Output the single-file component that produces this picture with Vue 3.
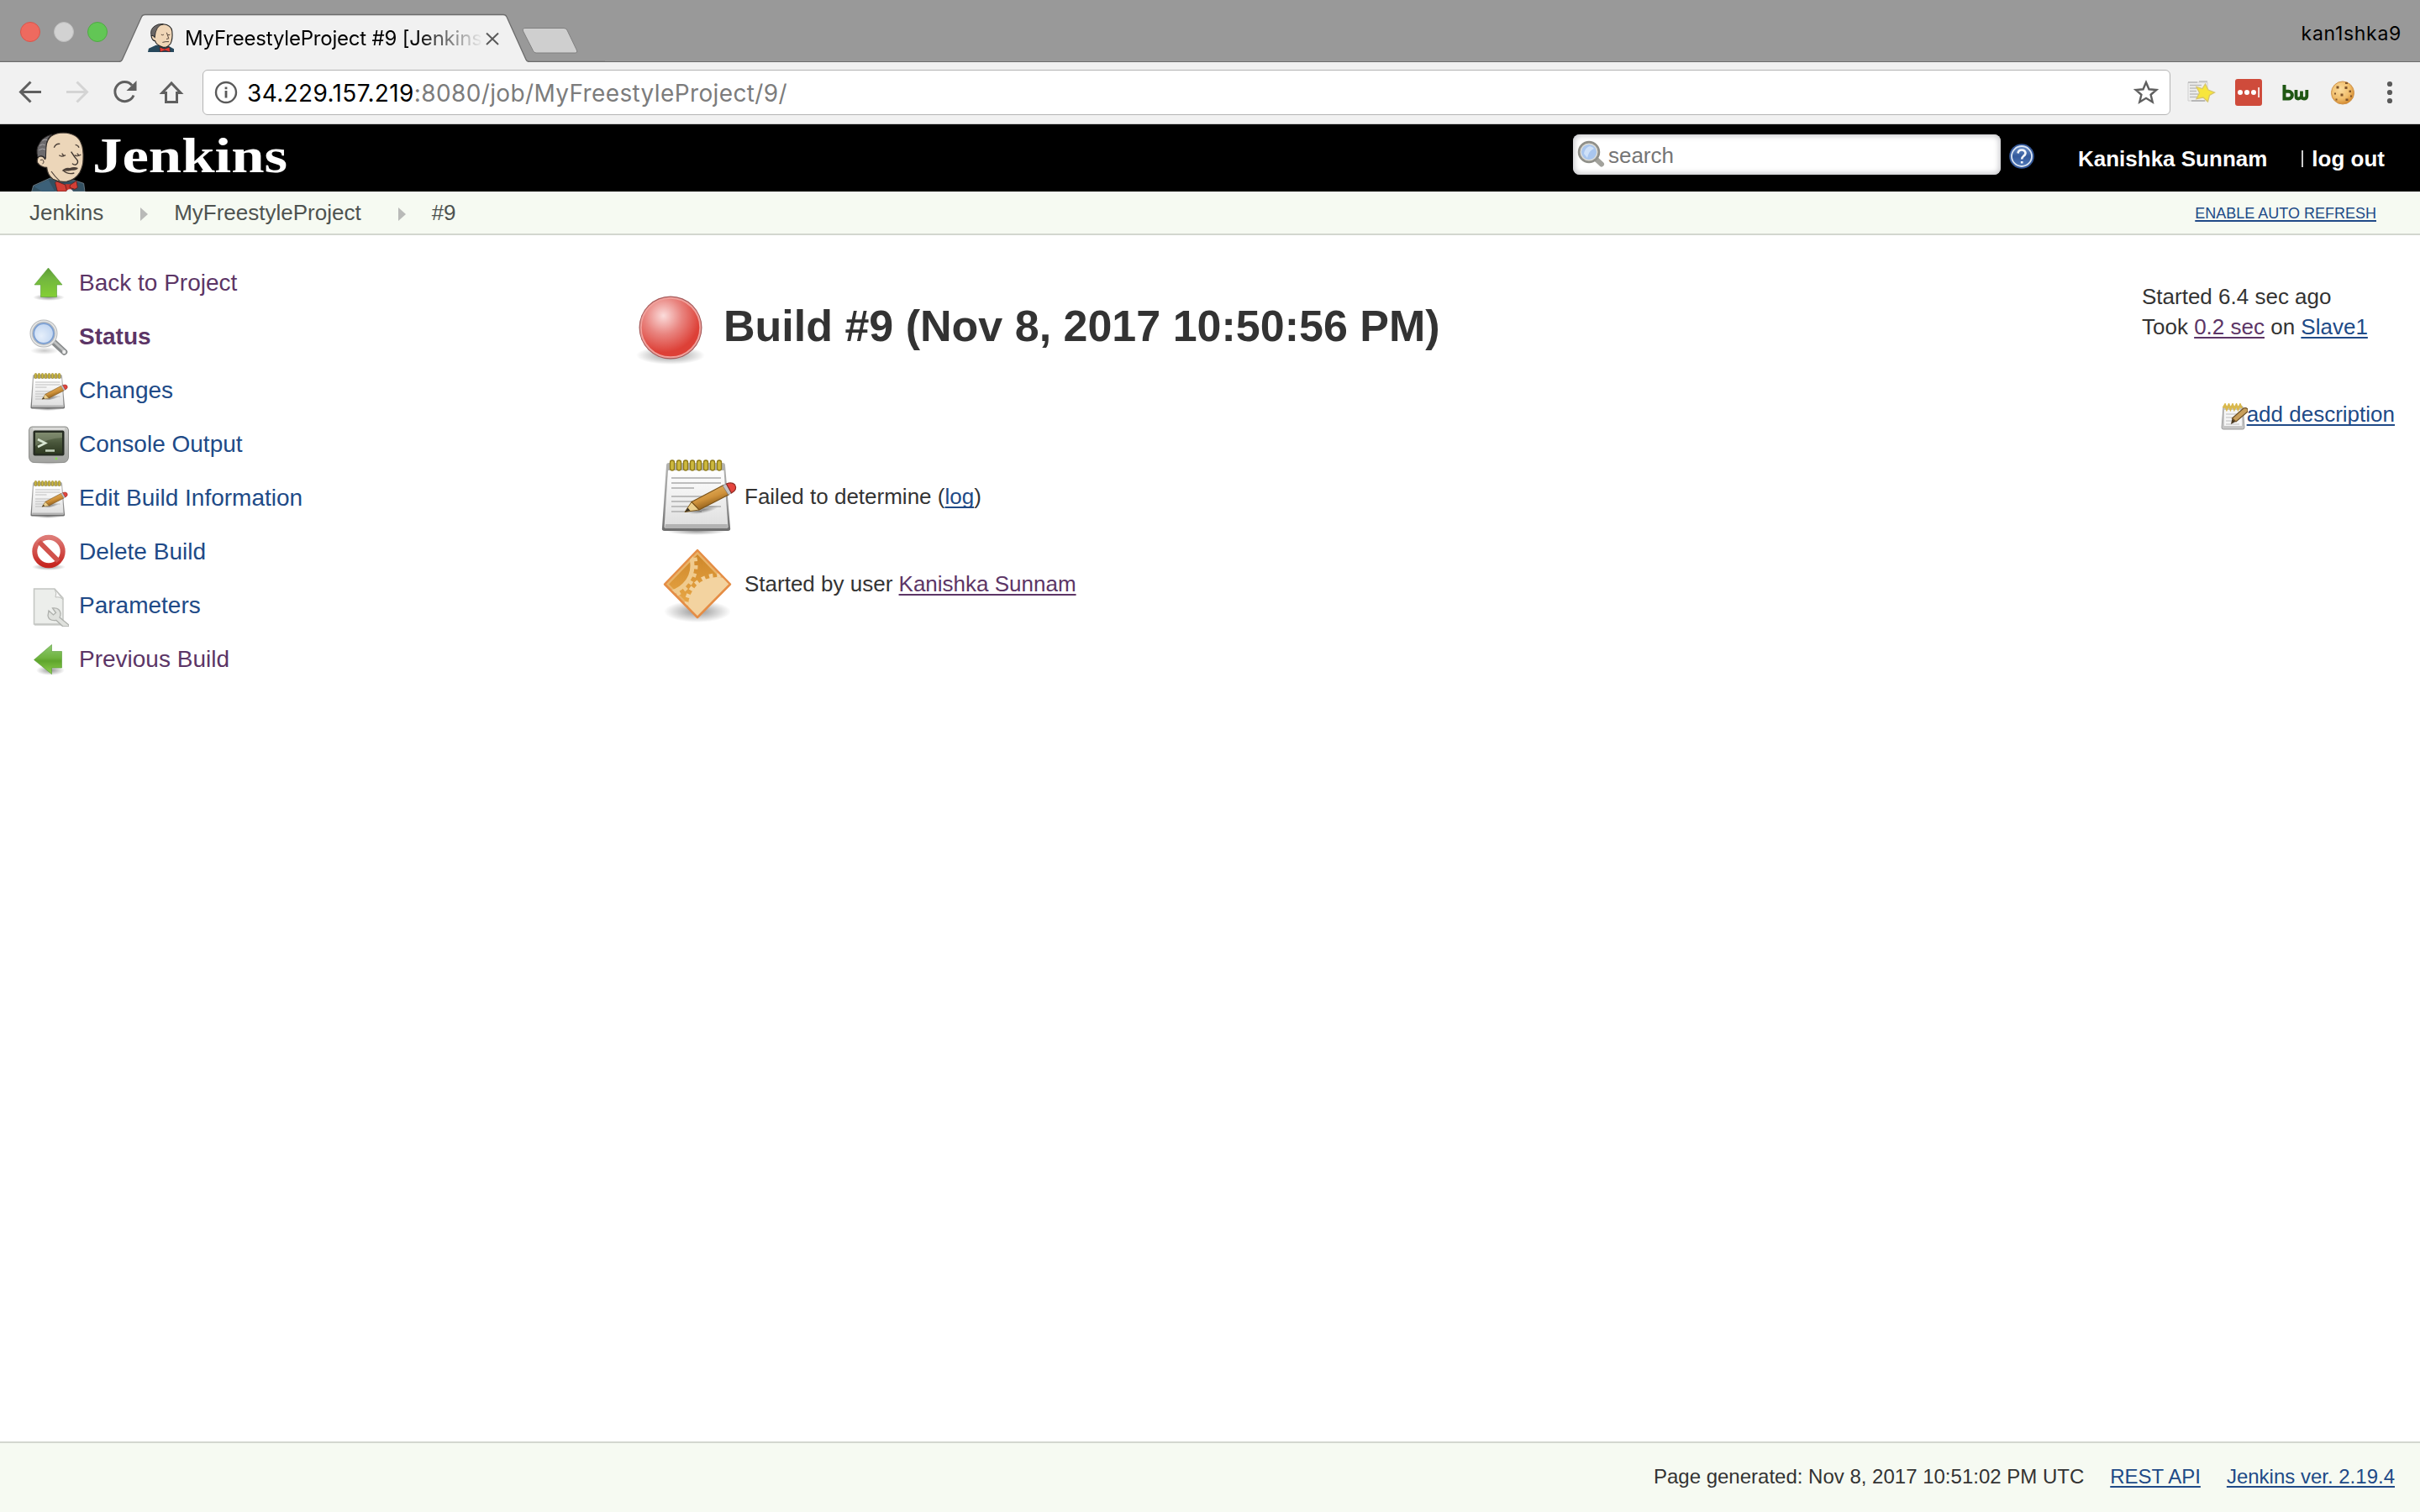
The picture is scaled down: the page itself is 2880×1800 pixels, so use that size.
<script setup>
const tasks = [
  { label: 'Back to Project', icon: 'i-up', visited: true },
  { label: 'Status', icon: 'i-search', visited: true, bold: true },
  { label: 'Changes', icon: 'i-notepad' },
  { label: 'Console Output', icon: 'i-terminal' },
  { label: 'Edit Build Information', icon: 'i-notepad' },
  { label: 'Delete Build', icon: 'i-delete' },
  { label: 'Parameters', icon: 'i-params' },
  { label: 'Previous Build', icon: 'i-prev', visited: true },
]
const rings = [0, 1, 2, 3, 4, 5, 6, 7]
</script>

<template>
  <div class="window">
    <svg class="sprites" width="0" height="0" aria-hidden="true">
      <defs>
        <linearGradient id="g-green" x1="0" y1="0" x2="0" y2="1">
          <stop offset="0" stop-color="#5d9c35" /><stop offset=".35" stop-color="#72b63f" /><stop offset="1" stop-color="#84cf35" />
        </linearGradient>
        <linearGradient id="g-green2" x1="0" y1="0" x2="0" y2="1">
          <stop offset="0" stop-color="#8ec972" /><stop offset=".45" stop-color="#6fb33e" /><stop offset=".55" stop-color="#5fa52c" /><stop offset="1" stop-color="#8fd04e" />
        </linearGradient>
        <radialGradient id="g-shadow">
          <stop offset="0" stop-color="#000" stop-opacity=".42" /><stop offset="1" stop-color="#000" stop-opacity="0" />
        </radialGradient>
        <radialGradient id="g-lens" cx=".4" cy=".6" r=".65">
          <stop offset="0" stop-color="#e6effb" /><stop offset="1" stop-color="#b9d0ef" />
        </radialGradient>
        <linearGradient id="g-paper" x1="0" y1="0" x2="0" y2="1">
          <stop offset="0" stop-color="#ffffff" /><stop offset="1" stop-color="#dedede" />
        </linearGradient>
        <linearGradient id="g-frame" x1="0" y1="0" x2="0" y2="1">
          <stop offset="0" stop-color="#b4b4b2" /><stop offset=".6" stop-color="#999" /><stop offset="1" stop-color="#6c6c6c" />
        </linearGradient>
        <linearGradient id="g-pencil" x1="0" y1="0" x2=".5" y2="1">
          <stop offset="0" stop-color="#f0c274" /><stop offset=".6" stop-color="#cf923b" /><stop offset="1" stop-color="#7d4f12" />
        </linearGradient>
        <linearGradient id="g-term" x1="0" y1="0" x2="0" y2="1">
          <stop offset="0" stop-color="#6d7b5c" /><stop offset=".5" stop-color="#48553a" /><stop offset="1" stop-color="#2f3a22" />
        </linearGradient>
        <linearGradient id="g-bezel" x1="0" y1="0" x2="0" y2="1">
          <stop offset="0" stop-color="#c9cac7" /><stop offset="1" stop-color="#a2a3a0" />
        </linearGradient>
        <linearGradient id="g-red" x1="0" y1="0" x2="0" y2="1">
          <stop offset="0" stop-color="#dd7a76" /><stop offset="1" stop-color="#c6251f" />
        </linearGradient>
        <radialGradient id="g-ball" cx=".38" cy=".3" r=".62">
          <stop offset="0" stop-color="#fbdcdb" /><stop offset=".5" stop-color="#e98580" /><stop offset="1" stop-color="#dd4037" />
        </radialGradient>
        <linearGradient id="g-diamond" x1="0" y1="0" x2="0" y2="1">
          <stop offset="0" stop-color="#cc8427" /><stop offset="1" stop-color="#efb04f" />
        </linearGradient>
        <linearGradient id="g-help" x1="0" y1="0" x2="0" y2="1">
          <stop offset="0" stop-color="#6f94cc" /><stop offset=".5" stop-color="#345a9c" /><stop offset="1" stop-color="#5179b8" />
        </linearGradient>
        <radialGradient id="g-cookie" cx=".4" cy=".35" r=".65">
          <stop offset="0" stop-color="#fbdc9e" /><stop offset=".65" stop-color="#f0bd6b" /><stop offset="1" stop-color="#d58c32" />
        </radialGradient>

        <symbol id="i-up" viewBox="0 0 48 48">
          <ellipse cx="24" cy="40" rx="19" ry="4" fill="url(#g-shadow)" />
          <path d="M23.500 5 L40 25 H33.500 V39.500 H14.500 V25 H7 Z" fill="url(#g-green)" stroke="#559b33" stroke-opacity=".6" />
        </symbol>
        <symbol id="i-prev" viewBox="0 0 48 48">
          <ellipse cx="26" cy="36" rx="17" ry="6" fill="url(#g-shadow)" />
          <path d="M6.500 23.500 L27.500 5.500 V13.500 H39.500 V33 H27.500 V40.500 Z" fill="url(#g-green2)" stroke="#559b33" stroke-opacity=".6" />
        </symbol>
        <symbol id="i-search" viewBox="0 0 48 48">
          <ellipse cx="19" cy="39.500" rx="17" ry="4.500" fill="url(#g-shadow)" opacity=".5" />
          <path d="M29 28.500 L42.500 41" stroke="#888b8c" stroke-width="7.500" stroke-linecap="round" />
          <path d="M29.500 28 L42.500 40" stroke="#bfc1c1" stroke-width="3" stroke-linecap="round" />
          <circle cx="42.300" cy="41" r="2.200" fill="#eee" />
          <circle cx="18" cy="19" r="14.500" fill="url(#g-lens)" stroke="#b7b9ba" stroke-width="4" />
          <circle cx="18" cy="19" r="14.700" fill="none" stroke="#e6e7e7" stroke-width="1.600" />
          <circle cx="18" cy="19" r="11.800" fill="none" stroke="#7b9fd3" stroke-width="1.800" />
        </symbol>
        <symbol id="i-notepad" viewBox="0 0 96 96">
          <ellipse cx="46" cy="89" rx="36" ry="5" fill="url(#g-shadow)" />
          <path d="M13 8 H77 Q80 8 80 11 L86 85 Q87 89 83 89 H8 Q4 89 5 85 L10 11 Q10 8 13 8Z" fill="url(#g-frame)" />
          <path d="M12 17 H78.500 L83.500 85 H7.500Z" fill="url(#g-paper)" />
          <path d="M9 81 H82.500 L83 86 H8Z" fill="#b3b3b3" />
          <g stroke="#bdbdbd" stroke-width="2">
            <path d="M16 26H75M16 32H75M16 38H43M16 48H60M16 54H57M16 60H75M16 66H52" />
          </g>
          <g v-for="r in rings" :key="r">
            <rect :x="14.500 + r * 8" y="5" width="5" height="12" rx="2.500" fill="#cdb93f" stroke="#8f7a17" stroke-width="1.300" />
          </g>
          <ellipse cx="54" cy="64" rx="18" ry="4" fill="url(#g-shadow)" transform="rotate(-12 54 64)" />
          <path d="M32 66.500 L40 54.500 L49 64 Z" fill="#ecd08e" stroke="#805b1d" stroke-width="1" />
          <path d="M32 66.500 L35.500 61.500 L38.500 65 Z" fill="#3c3325" />
          <path d="M40 54.500 L78 34.500 L84 46 L49 64 Z" fill="url(#g-pencil)" stroke="#7a531a" stroke-width="1.200" />
          <path d="M77 35 L81.500 33 L87.500 44 L83.700 46Z" fill="#c3c3c6" stroke="#777" stroke-width=".6" />
          <path d="M81.500 33 Q88 30.500 91.500 34 Q95 40 87.500 44Z" fill="#e5453e" stroke="#8f2b23" stroke-width="1.200" />
        </symbol>
        <symbol id="i-terminal" viewBox="0 0 48 48">
          <ellipse cx="24" cy="44" rx="21" ry="3" fill="url(#g-shadow)" />
          <path d="M4 2 H44 Q47 2 47.500 6 V38 Q47 44 42 44.500 H6 Q1 44 .5 38 V6 Q1 2 4 2Z" fill="url(#g-bezel)" stroke="#8e8f8c" />
          <path d="M5 4.500H43" stroke="#e2e2e0" stroke-width="2" />
          <rect x="5.500" y="6.500" width="37" height="30" rx="2" fill="#262c22" />
          <rect x="8" y="9" width="32" height="25" fill="url(#g-term)" />
          <path d="M8 9H40V15Q22 16 8 25Z" fill="#a2ad93" opacity=".35" />
          <path d="M11 17 L20 21.500 L11 26" fill="none" stroke="#d8e6d2" stroke-width="2.600" />
          <path d="M20 30.500H31" stroke="#c3d0bc" stroke-width="2.600" />
          <circle cx="33" cy="40" r="1.400" fill="#87dd52" />
        </symbol>
        <symbol id="i-delete" viewBox="0 0 48 48">
          <ellipse cx="24" cy="41" rx="20" ry="4" fill="url(#g-shadow)" />
          <circle cx="24" cy="22.500" r="16.700" fill="#fff" stroke="url(#g-red)" stroke-width="6" />
          <path d="M12.500 11 L35.500 34" stroke="#d1524c" stroke-width="6" />
        </symbol>
        <symbol id="i-params" viewBox="0 0 48 48">
          <path d="M6.500 3 H31 L41 14 V45 H6.500Z" fill="#e9ebe8" stroke="#c4c6c2" stroke-width="1.500" />
          <path d="M8 4.500 H30 L39 15 V43 H8Z" fill="#eceeeb" />
          <path d="M31 3 Q34 8 32 13 Q38 12 41 16Z" fill="#f7f7f6" stroke="#bfc1bd" />
          <path d="M7 46H40" stroke="#b8bab6" stroke-width="1" />
          <path d="M24 29 L29.500 34 L32.500 31.500 L28.500 26 Q37 25 38 32 Q38 35 37 37 L48 46 V48 H41 L33 40.500 Q24 41.500 23 35 Z" fill="#dfe1dd" stroke="#aeb0ac" stroke-width="1.300" />
        </symbol>
      </defs>
    </svg>

    <header class="tabstrip">
      <svg class="tabs" width="720" height="74" viewBox="0 0 720 74">
        <circle cx="36" cy="38" r="11.500" fill="#ee6a5f" stroke="#d9554b" />
        <circle cx="76" cy="38" r="11.500" fill="#d2d2d2" stroke="#bdbdbd" />
        <circle cx="116" cy="38" r="11.500" fill="#62c655" stroke="#50aa44" />
        <path d="M0 73.500H141.500Q144.500 73.500 145.500 71L168.500 20Q169.700 17.500 172.500 17.500H599Q602 17.500 603 20L626 71Q627 73.500 630 73.500H720V75H0Z" fill="#f1f1f1" />
        <path d="M0 73.500H141.500Q144.500 73.500 145.500 71L168.500 20Q169.700 17.500 172.500 17.500H599Q602 17.500 603 20L626 71Q627 73.500 630 73.500H720" fill="none" stroke="#6c6c6c" stroke-width="1.300" />
        <path d="M625 33.500H671Q674 33.500 675 36L686.500 60Q687.500 63 685 63H638Q635.500 63 634.500 60.500L622.500 37Q621.500 33.500 625 33.500Z" fill="#cfcfcf" stroke="#808080" />
        <path d="M579 39.500L593 53M593 39.500L579 53" stroke="#5a5a5a" stroke-width="2" />
      </svg>
      <div class="tab-label">
        <svg width="31" height="34" viewBox="48 46 200 218">
          <path d="M48 264L54 238L110 212H195L248 240V264Z" fill="#27485c" />
          <path d="M100 95Q115 50 165 50Q228 55 234 105Q240 165 222 200Q195 232 165 228Q110 210 104 180Q78 175 74 140Q84 130 100 150Z" fill="#f0d6b7" stroke="#222" stroke-width="7" />
          <path d="M74 140Q62 90 100 65Q125 45 165 50Q110 60 100 150Q86 130 74 140Z" fill="#6a6665" stroke="#222" stroke-width="5" />
          <path d="M150 130q10 8 20 0M200 130q10 8 18 0M192 115l16 45l-18 5M160 190q25-8 50-5" fill="none" stroke="#4b3b32" stroke-width="6" />
          <path d="M138 226L175 240L215 226L218 264L180 252L142 264Z" fill="#e03a34" stroke="#222" stroke-width="4" />
        </svg>
        <span class="tab-title">MyFreestyleProject #9 [Jenkins</span>
      </div>
      <span class="profile">kan1shka9</span>
    </header>

    <div class="toolbar">
      <svg class="nav" width="241" height="72" viewBox="0 74 241 72" fill="none" stroke="#5f5f5f" stroke-width="3">
        <path d="M49 109.500H25M36.500 97.500L24.500 109.500L36.500 121.500" />
        <path d="M79 109.500H103M91.500 97.500L103.500 109.500L91.500 121.500" stroke="#d4d4d4" />
        <path d="M157 101.500A11.500 11.500 0 1 0 159 113.500" />
        <path d="M162.500 96V108H150.500Z" fill="#5f5f5f" stroke="none" />
        <path d="M204 99L193 110.500H197.500V121.500H210.500V110.500H215Z" />
      </svg>
      <div class="omnibox">
        <svg width="28" height="28" viewBox="0 0 28 28"><circle cx="14" cy="14" r="12" fill="none" stroke="#5a5a5a" stroke-width="2.400" /><path d="M14 12V20.500M14 7.500V10.200" stroke="#5a5a5a" stroke-width="2.800" /></svg>
        <span class="url"><b>34.229.157.219</b>:8080/job/MyFreestyleProject/9/</span>
        <svg class="star" width="32" height="32" viewBox="0 0 32 32"><path d="M16 4L19.500 12.300L28.300 13L21.600 18.800L23.700 27.500L16 22.800L8.300 27.500L10.400 18.800L3.700 13L12.500 12.300Z" fill="none" stroke="#5f5f5f" stroke-width="2.400" /></svg>
      </div>
      <svg class="exts" width="297" height="72" viewBox="2583 74 297 72">
        <path d="M2604 98H2627V120H2604Z" fill="#eeeeee" stroke="#cfcfcf" />
        <path d="M2604 98H2615M2617 97H2627M2606 101.500H2620M2606 105H2617M2606 108.500H2614M2606 112H2616M2606 115.500H2616" stroke="#bcbcbc" stroke-width="1.300" />
        <path d="M2608 120H2624" stroke="#aaa" stroke-width="1.500" />
        <path d="M2624.500 100L2628 107L2635.500 110L2629.500 113.500L2627.500 121L2622 116L2614 117.500L2617.500 110.500L2614 103.500L2621 105.500Z" fill="#f7e63c" stroke="#d7c56b" stroke-width="1.300" />
        <rect x="2660" y="94" width="32" height="32" rx="3" fill="#cf4b3b" />
        <g fill="#fff"><circle cx="2666" cy="110" r="3" /><circle cx="2674" cy="110" r="3" /><circle cx="2682" cy="110" r="3" /><rect x="2687.300" y="104" width="1.600" height="12" /></g>
        <path d="M2718.500 101V117.500H2723.500A4.200 4.200 0 0 0 2723.500 108.800H2719" fill="none" stroke="#1f5714" stroke-width="4" />
        <path d="M2732.500 107V114.500Q2732.500 117.500 2735 117.500T2739 114.500V108.500V114.500Q2739 117.500 2742 117.500T2745.300 114.500V107" fill="none" stroke="#1f5714" stroke-width="3.800" />
        <circle cx="2788" cy="110.500" r="13.500" fill="url(#g-cookie)" stroke="#cf934a" stroke-width="1" />
        <g fill="#80542a"><rect x="2780.500" y="102.500" width="3" height="3" /><rect x="2791" y="98" width="3" height="2" /><rect x="2790.500" y="103" width="3" height="3" /><rect x="2785.500" y="111.500" width="3" height="3" /><rect x="2795.500" y="107.500" width="2.500" height="2.500" /><rect x="2778" y="110.500" width="2" height="2" /><rect x="2779.500" y="117.500" width="2" height="2" /><rect x="2791.500" y="117.500" width="3" height="2.500" /><rect x="2797" y="113.500" width="2" height="2" /></g>
        <g fill="#5a5a5a"><circle cx="2844" cy="100" r="3.100" /><circle cx="2844" cy="110" r="3.100" /><circle cx="2844" cy="120" r="3.100" /></g>
      </svg>
    </div>

    <div class="masthead">
      <div class="brand">
        <svg width="66" height="72" viewBox="50 48 198 216">
          <path d="M52 264L58 243L118 216L150 226L205 224L238 235L242 264Z" fill="#335061" stroke="#8b9aa5" stroke-width="2" />
          <path d="M60 246L112 222L135 264H90Z" fill="#3c6078" />
          <path d="M100 150Q98 85 122 66Q140 54 165 54Q215 56 228 90Q238 110 236 150Q236 172 224 196Q208 222 178 228Q150 232 128 220Q108 205 106 178Q84 178 72 160Q70 142 82 138Q94 136 100 150Z" fill="#ecd6b9" stroke="#3a322c" stroke-width="3.500" />
          <path d="M74 142Q66 112 78 96Q88 70 124 60Q106 74 104 100L102 146Q88 130 74 142Z" fill="#6d6b6d" stroke="#2e2b2b" stroke-width="3" />
          <path d="M80 100Q92 92 100 98M78 116Q90 108 101 114M90 82Q98 76 108 80" fill="none" stroke="#a7a5a8" stroke-width="3" />
          <path d="M83 152Q92 146 95 156Q96 162 90 166" fill="none" stroke="#4c4038" stroke-width="3" />
          <path d="M132 107Q138 92 153 94M208 97Q218 98 221 107" fill="none" stroke="#4c4038" stroke-width="4" />
          <path d="M150 134Q160 142 173 134M160 128L168 138M205 134Q216 141 228 132M214 128L222 136" fill="none" stroke="#4c4038" stroke-width="4" />
          <path d="M193 122Q204 140 215 152Q220 162 210 168Q202 170 197 164" fill="none" stroke="#3a322c" stroke-width="4" />
          <path d="M160 190Q172 176 188 180Q204 174 218 180Q212 190 196 188Q178 192 160 190Z" fill="#4c4038" />
          <path d="M164 188Q180 204 204 198" fill="none" stroke="#4c4038" stroke-width="4" />
          <path d="M122 192Q136 212 152 226" fill="none" stroke="#4c4038" stroke-width="3.500" />
          <path d="M172 238L192 238L196 264H174Z" fill="#c6342d" />
          <path d="M136 232L142 228L172 240L178 264H144Z M190 240L212 226L216 250L206 256L188 250Z" fill="#d33f36" stroke="#5f1f1c" stroke-width="2.500" />
          <path d="M178 260Q188 252 198 260L200 264H176Z" fill="#eceff1" />
        </svg>
        <span class="wordmark">Jenkins</span>
      </div>
      <div class="searchbox">
        <svg width="34" height="34" viewBox="0 0 34 34">
          <path d="M23 22L30 28.500" stroke="#a2a29c" stroke-width="6" stroke-linecap="round" />
          <circle cx="15" cy="14" r="11.500" fill="#a9c6ee" stroke="#8f8f89" stroke-width="3.500" />
          <circle cx="15" cy="14" r="9.800" fill="none" stroke="#dcdcd6" stroke-width="1.500" />
          <path d="M9 16Q10 9 16 7Q20 8 21 10Q15 12 13 21Z" fill="#cfe1f8" />
        </svg>
        <span>search</span>
      </div>
      <svg class="help" width="32" height="32" viewBox="0 0 32 32">
        <circle cx="16" cy="16" r="14.800" fill="#34599a" />
        <circle cx="16" cy="16" r="12" fill="url(#g-help)" stroke="#dbe5f3" stroke-width="1.800" />
        <path d="M11.500 12.500Q12 8.500 16 8.500T20.500 12.300Q20.500 14.500 18 16Q16.200 17.200 16.200 19.500M16.200 22V24.600" fill="none" stroke="#f3f6fb" stroke-width="2.700" />
      </svg>
      <span class="user">Kanishka Sunnam</span>
      <i class="bar"></i>
      <span class="logout">log out</span>
    </div>

    <nav class="crumbs">
      <span>Jenkins</span><i></i><span>MyFreestyleProject</span><i></i><span>#9</span>
      <a class="refresh">ENABLE AUTO REFRESH</a>
    </nav>

    <main>
      <aside>
        <a v-for="t in tasks" :key="t.label" class="task" :class="{ visited: t.visited, bold: t.bold }">
          <svg width="48" height="48"><use :href="'#' + t.icon" /></svg>
          <span>{{ t.label }}</span>
        </a>
      </aside>
      <section class="build">
        <h1>
          <svg width="96" height="96" viewBox="0 0 96 96">
            <ellipse cx="48" cy="81" rx="41" ry="11" fill="url(#g-shadow)" />
            <circle cx="48" cy="48" r="37.500" fill="#a55a5a" />
            <circle cx="48" cy="48" r="35.300" fill="url(#g-ball)" stroke="#f0a09b" stroke-width="2" />
          </svg>
          <span>Build #9 (Nov 8, 2017 10:50:56 PM)</span>
        </h1>
        <div class="row">
          <svg width="96" height="96"><use href="#i-notepad" /></svg>
          <span>Failed to determine (<a class="link">log</a>)</span>
        </div>
        <div class="row">
          <svg width="96" height="96" viewBox="0 0 96 96">
            <defs><clipPath id="dia"><path d="M47 9L85 48.500L47 87.500L9 48.500Z" /></clipPath></defs>
            <ellipse cx="47" cy="81" rx="40" ry="13" fill="url(#g-shadow)" />
            <path d="M47 8L86 48.500L47 88L8 48.500Z" fill="url(#g-diamond)" />
            <g clip-path="url(#dia)">
              <path d="M47 11L83 48.500L47 85L11 48.500Z" fill="none" stroke="#e9b368" stroke-width="3" />
              <circle cx="8" cy="26" r="33" fill="none" stroke="#f0cb8e" stroke-width="5" />
              <circle cx="8" cy="26" r="37" fill="none" stroke="#f0cb8e" stroke-width="5" stroke-dasharray="4.500 5.186" />
              <circle cx="70" cy="74" r="34" fill="#f3d3a0" />
              <circle cx="70" cy="74" r="36" fill="none" stroke="#f3d3a0" stroke-width="5" stroke-dasharray="4.500 4.925" />
            </g>
            <path d="M47 8L86 48.500L47 88L8 48.500Z" fill="none" stroke="#e58d45" stroke-width="2.500" stroke-linejoin="round" />
          </svg>
          <span>Started by user <a class="link visited">Kanishka Sunnam</a></span>
        </div>
      </section>
      <section class="info">
        <p>Started 6.4 sec ago<br>Took <a class="link visited">0.2 sec</a> on <a class="link">Slave1</a></p>
        <div class="describe">
          <svg width="32" height="32" viewBox="0 0 32 32">
            <path d="M3 4H26L28 29Q28 31 26 31H3Q1 31 1 29Z" fill="#c6c6c6" stroke="#9d9d9d" />
            <path d="M4 8H25V27H4Z" fill="#f5f5f5" />
            <path d="M6 13H22M6 17H18M6 21H16M6 25H22" stroke="#cfcfcf" stroke-width="1.300" />
            <path d="M3 5.500L5 2L7 7L9.500 2L11.500 7L14 2L16 7L18.500 2L20.500 7L23 2L25 6" fill="none" stroke="#d9b84c" stroke-width="2.600" />
            <path d="M12 25L13.500 18L17.500 22Z" fill="#4b3a22" />
            <path d="M13.500 18L27 6Q30 5 32 7V10L18 22Z" fill="#c89f5c" stroke="#6d4f22" stroke-width="1.200" />
          </svg><a class="link">add description</a>
        </div>
      </section>
    </main>

    <footer>
      <span>Page generated: Nov 8, 2017 10:51:02 PM UTC</span>
      <a class="link">REST API</a>
      <a class="link">Jenkins ver. 2.19.4</a>
    </footer>
  </div>
</template>

<style>
body { margin: 0; background: #fff; }
</style>

<style scoped>
.window { width: 2880px; height: 1800px; display: flex; flex-direction: column; overflow: hidden; background: #fff; color: #333; font: 26px/36px "Liberation Sans", Arial, sans-serif; }
.sprites { position: absolute; }
svg { display: block; flex: none; }
.tabstrip { position: relative; height: 74px; box-sizing: border-box; background: #999; display: flex; justify-content: space-between; border-bottom: 1px solid #6c6c6c; flex: none; }
.tabs { margin-bottom: -1px; }
.tab-label { position: absolute; left: 176px; top: 28px; display: flex; height: 36px; font: 24px/36px Inter, sans-serif; color: #000; }
.tab-title { margin-left: 13px; white-space: nowrap; letter-spacing: -0.2px; -webkit-mask-image: linear-gradient(90deg, #000 275px, transparent 355px); mask-image: linear-gradient(90deg, #000 275px, transparent 355px); }
.profile { font: 23px/34px Inter, sans-serif; letter-spacing: 0.7px; color: #000; margin: 23px 22px 0 0; }
.toolbar { height: 74px; box-sizing: border-box; background: #f1f1f1; border-bottom: 1px solid #c9c9c9; display: flex; flex: none; }
.omnibox { width: 2342px; height: 54px; box-sizing: border-box; margin-top: 9px; border: 1px solid #b4b4b4; border-radius: 6px; background: #fff; display: flex; align-items: center; padding: 0 12px 0 13px; }
.url { margin-left: 11px; flex: 1; font: 28px/50px Inter, sans-serif; letter-spacing: 0.37px; padding-top: 2px; color: #7c7c7c; }
.url b { font-weight: 400; color: #000; }
.masthead { height: 80px; background: #000; color: #fff; display: flex; flex: none; }
.brand { display: flex; flex: 1; padding: 8px 0 0 37px; }
.wordmark { font: bold 60px/72px "Liberation Serif", Georgia, serif; transform: scaleX(1.18); transform-origin: 0 0; margin: -7px 0 0 7px; height: 72px; }
.searchbox { width: 509px; height: 48px; margin-top: 12px; border-radius: 8px; background: #fff; box-shadow: inset 0 0 6px 2px #c8c8cc; display: flex; padding-left: 4px; box-sizing: border-box; color: #757575; line-height: 50px; }
.searchbox svg { margin-top: 7px; }
.searchbox span { margin-left: 4px; }
.help { margin: 22px 0 0 9px; }
.user, .logout { font-weight: bold; line-height: 82px; white-space: nowrap; }
.user { margin-left: 51px; }
.bar { width: 2px; height: 20px; background: #ccc; margin: 31px 0 0 41px; }
.logout { margin: 0 42px 0 10px; }
.crumbs { height: 52px; box-sizing: border-box; border-bottom: 2px solid #d3d7cf; background: #f6faf2; display: flex; align-items: center; padding: 0 52px 0 35px; color: #4e5350; line-height: 50px; flex: none; }
.crumbs i { border-left: 9px solid #b9bab8; border-top: 8px solid transparent; border-bottom: 8px solid transparent; margin: 3px 31px 0 44px; }
.refresh { margin-left: auto; font-size: 18px; color: #204a87; text-decoration: underline; text-decoration-thickness: 2px; text-underline-offset: 2px; padding-top: 2px; }
main { flex: 1; display: flex; }
aside { width: 726px; padding: 34px 0 0 34px; }
.task { display: flex; height: 64px; font-size: 28px; line-height: 46px; color: #204a87; }
.task span { margin-left: 12px; }
.task.visited, .link.visited { color: #5c3566; }
.bold { font-weight: bold; }
.build { flex: 1; margin-left: -10px; }
h1 { margin: 62px 0 0; font-size: 52px; line-height: 92px; display: flex; }
h1 span { margin-left: 15px; }
.row { display: flex; margin: 105px 0 0 33px; line-height: 96px; }
.row span { margin-left: 7px; }
.row + .row { margin-top: 8px; }
.link { color: #204a87; text-decoration: underline; text-decoration-thickness: 2px; text-underline-offset: 3px; text-decoration-skip-ink: none; }
.info { width: 331px; padding: 55px 30px 0 0; box-sizing: border-box; }
.info p { margin: 0; }
.describe { display: flex; justify-content: flex-end; margin-top: 68px; }
.describe svg { margin-top: 5px; margin-right: -1px; }
footer { height: 84px; box-sizing: border-box; border-top: 2px solid #d3d7cf; background: #f6faf2; display: flex; justify-content: flex-end; gap: 31px; padding-right: 30px; font-size: 24px; line-height: 80px; flex: none; }
</style>
